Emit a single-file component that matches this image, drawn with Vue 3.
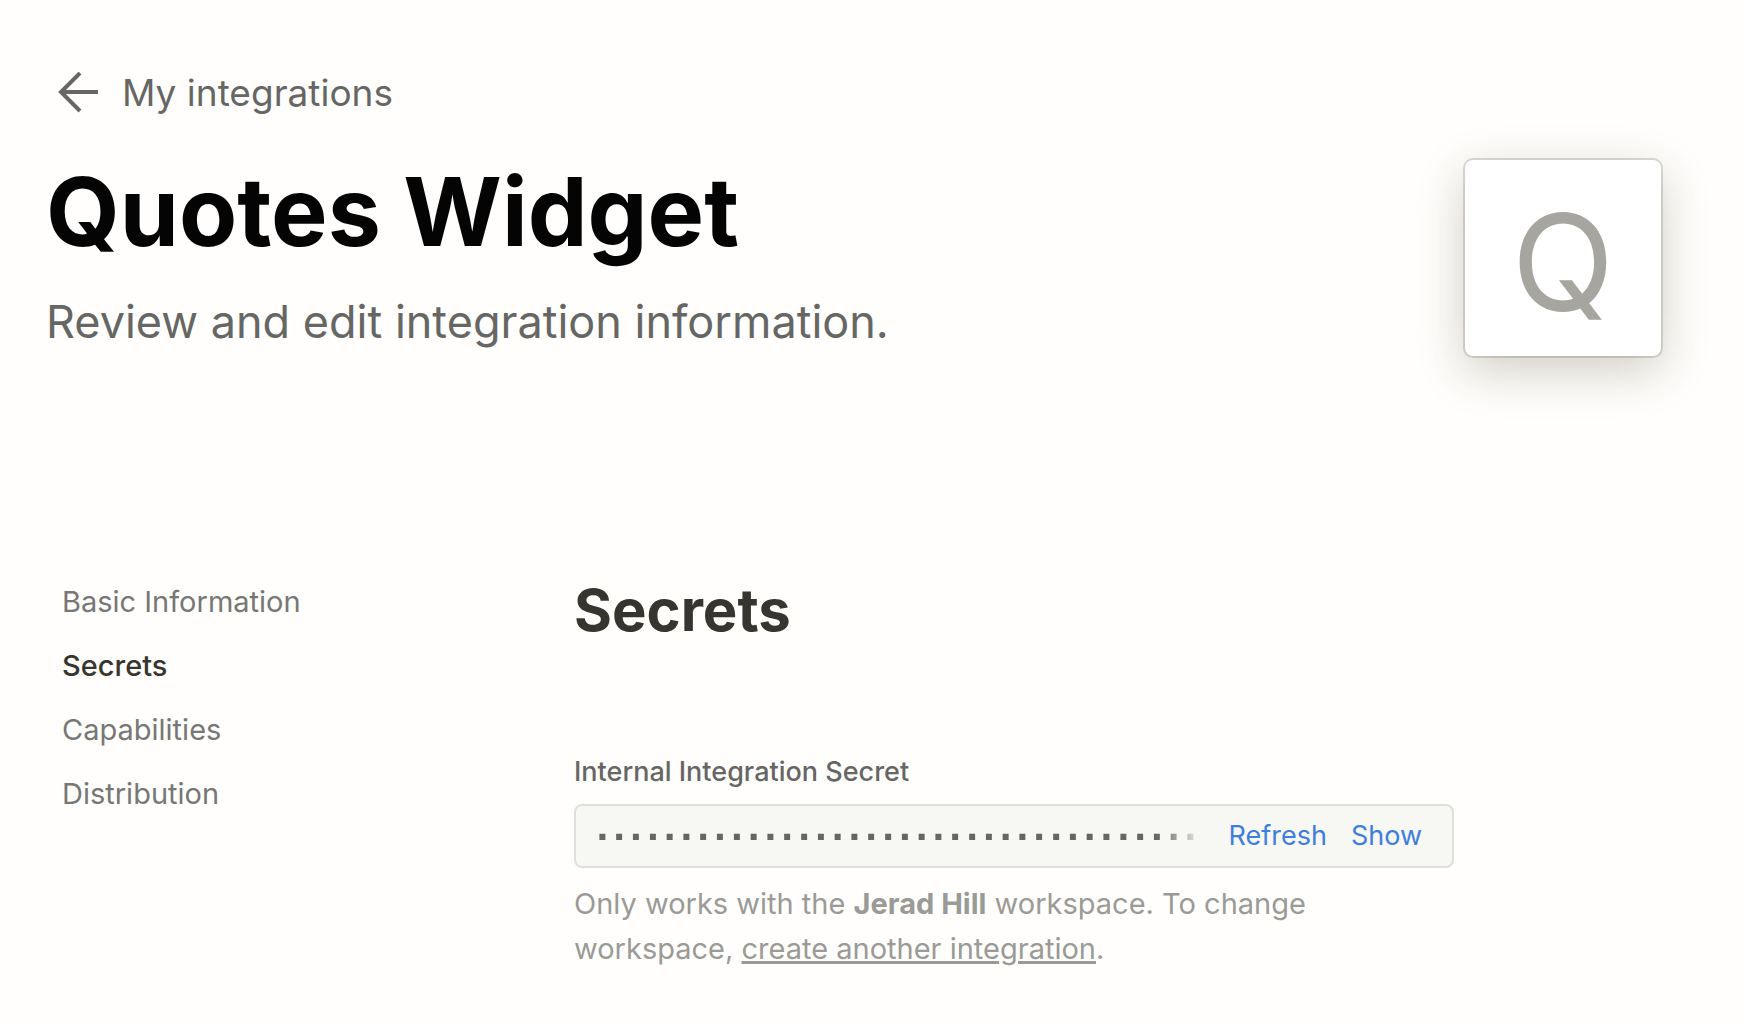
<script setup>
const sections = ['Basic Information', 'Secrets', 'Capabilities', 'Distribution']
const current = 'Secrets'
const secret = '·'.repeat(36)
</script>

<template>
  <main class="page">
    <a class="back" href="#">
      <svg width="42" height="42" viewBox="0 0 42 42" fill="none" stroke="#666664" stroke-width="4" aria-hidden="true">
        <path d="M40 20H3M22 1L3 20L22 39" />
      </svg>
      <span>My integrations</span>
    </a>
    <header class="header">
      <div>
        <h1>Quotes Widget</h1>
        <p class="lead">Review and edit integration information.</p>
      </div>
      <div class="logo">Q</div>
    </header>
    <div class="body">
      <nav class="nav">
        <a v-for="s in sections" :key="s" href="#" :class="{ active: s === current }">{{ s }}</a>
      </nav>
      <section class="content">
        <h2>Secrets</h2>
        <label for="secret">Internal Integration Secret</label>
        <div class="field">
          <input id="secret" type="text" readonly :value="secret" />
          <button type="button">Refresh</button>
          <button type="button">Show</button>
        </div>
        <p class="hint">
          Only works with the <strong>Jerad Hill</strong> workspace. To change workspace,
          <a href="#">create another integration</a>.
        </p>
      </section>
    </div>
  </main>
</template>

<style>
body {
  margin: 0;
  background: #fffefc;
}
</style>

<style scoped>
.page {
  box-sizing: border-box;
  padding: 68px 80px 40px 46px;
  font-family: Inter, "Liberation Sans", sans-serif;
  color: #666664;
}
.back {
  display: flex;
  align-items: center;
  gap: 22px;
  width: max-content;
  padding-left: 12px;
  color: inherit;
  font-size: 37px;
  line-height: 50px;
  text-decoration: none;
}
.header {
  display: flex;
  justify-content: space-between;
  align-items: flex-start;
  margin-top: 38px;
}
h1 {
  margin: 0;
  color: #040404;
  font-size: 95px;
  line-height: 112px;
}
.lead {
  margin: 26px 0 0;
  font-size: 45px;
  line-height: 56px;
}
.logo {
  box-sizing: border-box;
  width: 196px;
  height: 196px;
  margin: 4px 3px 0 0;
  border-radius: 8px;
  background: #fff;
  box-shadow: 0 0 0 2px rgba(15, 15, 15, 0.14), 0 14px 48px rgba(60, 45, 15, 0.24);
  color: #a6a5a0;
  font-size: 134px;
  line-height: 204px;
  text-align: center;
}
.body {
  display: flex;
  margin-top: 222px;
}
.nav {
  display: flex;
  flex-direction: column;
  flex: 0 0 528px;
  gap: 32px;
  box-sizing: border-box;
  padding: 8px 0 0 16px;
}
.nav a {
  color: #777775;
  font-size: 29px;
  line-height: 32px;
  text-decoration: none;
}
.nav .active {
  color: #37352f;
  font-weight: 500;
}
.content {
  flex: 1;
  max-width: 880px;
}
h2 {
  margin: 0 0 114px;
  color: #37352f;
  font-size: 58px;
  line-height: 64px;
}
label {
  display: block;
  font-size: 27px;
  font-weight: 500;
  line-height: 32px;
}
.field {
  display: flex;
  align-items: center;
  gap: 24px;
  box-sizing: border-box;
  height: 64px;
  margin-top: 16px;
  padding: 0 30px 0 18px;
  border: 2px solid #dfdfdc;
  border-radius: 8px;
  background: #f7f7f4;
}
input {
  flex: 1;
  min-width: 0;
  padding: 2px 0 0;
  border: 0;
  background: none;
  color: #666664;
  font: bold 28px "Liberation Mono", monospace;
  -webkit-text-stroke: 2px #666664;
  -webkit-mask-image: linear-gradient(to right, #000 calc(100% - 48px), transparent);
  mask-image: linear-gradient(to right, #000 calc(100% - 48px), transparent);
}
button {
  padding: 0;
  border: 0;
  background: none;
  color: #3e7fde;
  font: 27px/32px Inter, "Liberation Sans", sans-serif;
}
.hint {
  max-width: 780px;
  margin: 13px 0 0;
  color: #9a9a97;
  font-size: 29px;
  line-height: 45px;
}
.hint a {
  color: inherit;
  text-decoration-thickness: 3px;
}
</style>
